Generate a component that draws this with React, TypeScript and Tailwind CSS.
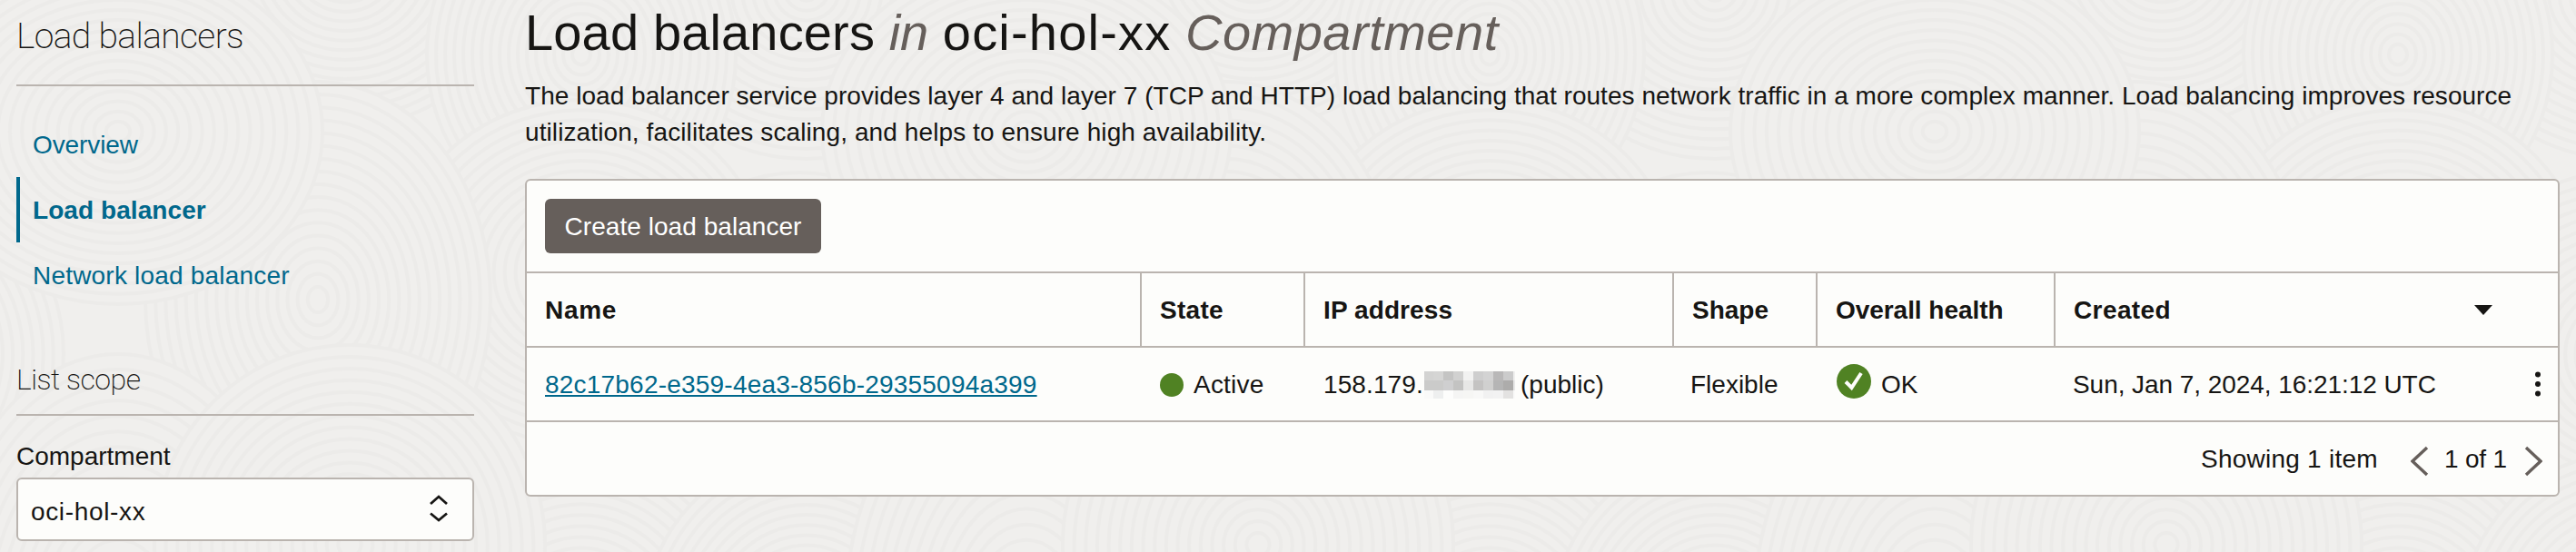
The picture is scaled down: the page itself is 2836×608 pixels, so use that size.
import type { ReactNode } from "react";

const TILE = 1000;

const RIPPLES = [
  { x: 380, y: -40, rx: 190, ry: 180 },
  { x: 888, y: -10, rx: 200, ry: 185 },
  { x: 640, y: 60, rx: 170, ry: 190 },
  { x: 640, y: 300, rx: 205, ry: 190 },
  { x: 880, y: 390, rx: 190, ry: 200 },
  { x: 350, y: 330, rx: 190, ry: 240 },
  { x: 130, y: 145, rx: 225, ry: 190 },
  { x: 130, y: 680, rx: 200, ry: 290 },
  { x: 640, y: 700, rx: 190, ry: 205 },
  { x: 888, y: 690, rx: 180, ry: 190 },
  { x: 385, y: 600, rx: 215, ry: 220 },
];

const RINGS = Array.from({ length: 17 }, (_, i) => 1 - i / 17);

function RippleBackground() {
  return (
    <svg className="col-start-1 row-start-1 h-[608px] w-[2836px]" viewBox="0 0 2836 608" aria-hidden="true">
      {[-TILE, 0, TILE, 2 * TILE].map((offset) =>
        RIPPLES.map((r) => (
          <g key={`${offset}-${r.x}-${r.y}`} stroke="#ecebe9" strokeWidth="4">
            {RINGS.map((k) => (
              <ellipse key={k} cx={r.x + offset} cy={r.y} rx={r.rx * k} ry={r.ry * k} fill="#f0efed" />
            ))}
          </g>
        )),
      )}
    </svg>
  );
}

function NavItem({ children, active = false }: { children: ReactNode; active?: boolean }) {
  return (
    <a
      className={
        active
          ? "flex h-[72px] items-center border-l-4 border-[#00688c] pt-[2px] pl-[14px] font-bold tracking-[0.07px]"
          : "flex h-[72px] items-center pt-[2px] pl-[18px]"
      }
    >
      {children}
    </a>
  );
}

function Sidebar() {
  return (
    <aside className="ml-[18px] w-[504px] shrink-0">
      <h2 className="h-[95px] border-b-2 border-[#bab4af] font-['Roboto',sans-serif] text-[39px] leading-[80px] font-extralight tracking-[-0.6px]">
        Load balancers
      </h2>
      <nav className="mt-7 text-[#00688c]">
        <NavItem>
          <span className="tracking-[-0.1px]">Overview</span>
        </NavItem>
        <NavItem active>Load balancer</NavItem>
        <NavItem>
          <span className="tracking-[0.2px]">Network load balancer</span>
        </NavItem>
      </nav>
      <h3 className="mt-[59px] h-[60px] border-b-2 border-[#bab4af] font-['Roboto',sans-serif] text-[32px] leading-[40px] font-extralight tracking-[-0.5px]">
        List scope
      </h3>
      <label className="mt-[25px] block leading-[40px]">Compartment</label>
      <div className="mt-[3px] flex h-[70px] items-center justify-between rounded-[6px] border-2 border-[#bab4af] bg-[#fdfdfb] pr-[26px] pl-[14px]">
        <span className="pt-[5px] tracking-[0.65px]">oci-hol-xx</span>
        <svg width="22" height="32" viewBox="0 0 22 32" fill="none" stroke="#161513" strokeWidth="2.8">
          <path d="M2 10 L11 2 L20 10" />
          <path d="M2 20.500 L11 28 L20 20.500" />
        </svg>
      </div>
    </aside>
  );
}

const MOSAIC = [
  "#d3d3d2", "#d5d5d4", "#c4c4c3", "#d1d1d0", "#f2f2f1", "#cecece", "#d3d3d3", "#b9b8b8", "#cbcbcb", "#f0f0ef",
  "#cbcbca", "#cbcbca", "#cfcfd0", "#c3c3c2", "#e7e7e6", "#c4c3c2", "#d0d0cf", "#b5b5b5", "#adacab", "#e8e8e8",
  "#fafaf9", "#eeefef", "#fdfdfc", "#f5f5f4", "#f6f6f4", "#f8f8f7", "#f1f1f1", "#f2f2f2", "#e3e2e1", "#fafaf9",
];

function RedactedDigits() {
  return (
    <div className="ml-[2px] grid grid-cols-[10px_repeat(8,11px)_2px] grid-rows-[10px_11px_9px]">
      {MOSAIC.map((color, i) => (
        <span key={i} style={{ backgroundColor: color }} />
      ))}
    </div>
  );
}

function HeaderCell({ children }: { children: ReactNode }) {
  return <div className="flex items-center border-r-2 border-[#bab4af] pt-[2px] pl-5">{children}</div>;
}

function LoadBalancerTable() {
  return (
    <section className="mt-[31px] w-[2240px] rounded-[6px] border-2 border-[#bab4af] bg-[#fdfdfb]">
      <div className="flex h-[102px] items-center border-b-2 border-[#bab4af] pl-5">
        <button className="h-[60px] w-[304px] rounded-[6px] bg-[#665f5b] pt-[2px] tracking-[0.05px] text-white">
          Create load balancer
        </button>
      </div>

      <div className="grid h-[82px] grid-cols-[677px_180px_406px_158px_262px_1fr] border-b-2 border-[#bab4af] font-bold">
        <HeaderCell>
          <span className="tracking-[0.7px]">Name</span>
        </HeaderCell>
        <HeaderCell>
          <span className="tracking-[0.3px]">State</span>
        </HeaderCell>
        <HeaderCell>
          <span className="tracking-[0.1px]">IP address</span>
        </HeaderCell>
        <HeaderCell>Shape</HeaderCell>
        <HeaderCell>
          <span className="tracking-[-0.05px]">Overall health</span>
        </HeaderCell>
        <div className="flex items-center justify-between pt-[2px] pr-[72px] pl-5">
          <span className="tracking-[0.4px]">Created</span>
          <svg width="20" height="12" viewBox="0 0 20 12" fill="#161513">
            <path d="M0 0 H20 L10 11 Z" />
          </svg>
        </div>
      </div>

      <div className="grid h-[82px] grid-cols-[677px_180px_406px_158px_262px_1fr] border-b-2 border-[#bab4af]">
        <div className="flex items-center pt-[2px] pl-5">
          <a className="tracking-[0.21px] text-[#00688c] underline decoration-2 underline-offset-[2px]">
            82c17b62-e359-4ea3-856b-29355094a399
          </a>
        </div>
        <div className="flex items-center gap-[11px] pt-[2px] pl-5">
          <span className="size-[26px] rounded-full bg-[#508223]" />
          <span className="tracking-[0.2px]">Active</span>
        </div>
        <div className="flex items-center pt-[2px] pl-5">
          <span className="w-[109px] tracking-[0.1px]">158.179.</span>
          <RedactedDigits />
          <span className="ml-[6px]">(public)</span>
        </div>
        <div className="flex items-center pt-[2px] pl-[18px]">Flexible</div>
        <div className="flex items-center gap-[11px] pt-[2px] pl-[21px]">
          <svg className="-mt-[8px]" width="38" height="38" viewBox="0 0 38 38">
            <circle cx="19" cy="19" r="19" fill="#508223" />
            <path d="M10 19.500 L16.500 26 L27 10" fill="none" stroke="#fdfdfb" strokeWidth="4" />
          </svg>
          <span>OK</span>
        </div>
        <div className="flex items-center justify-between pt-[2px] pr-[19px] pl-[19px]">
          <span className="tracking-[-0.06px]">Sun, Jan 7, 2024, 16:21:12 UTC</span>
          <svg className="-mt-[2px]" width="6" height="28" viewBox="0 0 6 28" fill="#161513">
            <circle cx="3" cy="3.500" r="3" />
            <circle cx="3" cy="14" r="3" />
            <circle cx="3" cy="24.500" r="3" />
          </svg>
        </div>
      </div>

      <div className="flex h-[80px] items-center justify-end pt-[2px] pr-[17px]">
        <span className="w-[231px] tracking-[0.24px]">Showing 1 item</span>
        <svg className="mt-[4px]" width="20" height="34" viewBox="0 0 20 34" fill="none" stroke="#665f5b" strokeWidth="3.4">
          <path d="M18 2 L2 17 L18 32" />
        </svg>
        <span className="ml-[17px] w-[88px] tracking-[-0.2px]">1 of 1</span>
        <svg className="mt-[4px]" width="20" height="34" viewBox="0 0 20 34" fill="none" stroke="#665f5b" strokeWidth="3.4">
          <path d="M2 2 L18 17 L2 32" />
        </svg>
      </div>
    </section>
  );
}

export default function App() {
  return (
    <div className="grid h-[608px] w-[2836px] overflow-hidden bg-[#f0efed] font-['Liberation_Sans',Arial,sans-serif] text-[28px] leading-[40px] text-[#161513]">
      <RippleBackground />
      <div className="z-10 col-start-1 row-start-1 flex gap-[56px]">
        <Sidebar />
        <main>
          <h1 className="h-[86px] text-[56px] leading-[71px] whitespace-nowrap">
            <span className="tracking-[0.15px]">Load balancers</span> <i className="text-[#665f5b]">in</i>{" "}
            <span className="tracking-[1.2px]">oci-hol-xx</span>{" "}
            <i className="tracking-[0.5px] text-[#665f5b]">Compartment</i>
          </h1>
          <p className="whitespace-nowrap">
            <span className="block tracking-[0.036px]">
              The load balancer service provides layer 4 and layer 7 (TCP and HTTP) load balancing that routes network
              traffic in a more complex manner. Load balancing improves resource
            </span>
            <span className="block tracking-[0.1px]">
              utilization, facilitates scaling, and helps to ensure high availability.
            </span>
          </p>
          <LoadBalancerTable />
        </main>
      </div>
    </div>
  );
}
